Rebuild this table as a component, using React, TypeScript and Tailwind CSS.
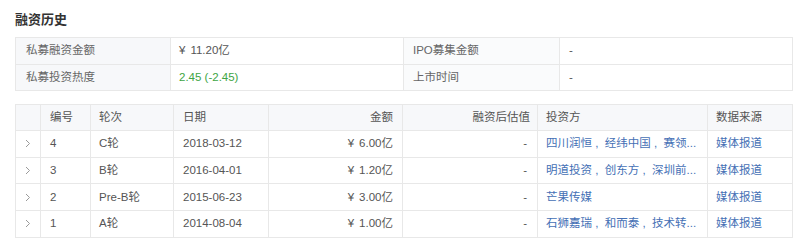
const font = { fontFamily: '"Liberation Sans", "Noto Sans CJK SC", sans-serif' };

const sep = '\u00a0,\u00a0\u00a0';

const rounds = [
  { no: '4', round: 'C轮', date: '2018-03-12', amount: '6.00亿', value: '-', investors: `四川润恒${sep}经纬中国${sep}赛领...`, source: '媒体报道' },
  { no: '3', round: 'B轮', date: '2016-04-01', amount: '1.20亿', value: '-', investors: `明道投资${sep}创东方${sep}深圳前...`, source: '媒体报道' },
  { no: '2', round: 'Pre-B轮', date: '2015-06-23', amount: '3.00亿', value: '-', investors: '芒果传媒', source: '媒体报道' },
  { no: '1', round: 'A轮', date: '2014-08-04', amount: '1.00亿', value: '-', investors: `石狮嘉瑞${sep}和而泰${sep}技术转...`, source: '媒体报道' },
];

function Chevron() {
  return (
    <svg width="6" height="9" viewBox="0 0 6 9" className="mx-auto">
      <polyline points="1,1 4.5,4.5 1,8" fill="none" stroke="#9a9a9a" strokeWidth="1" />
    </svg>
  );
}

function Money({ v }: { v: string }) {
  return (
    <>
      <span className="mr-[5px]">¥</span>
      {v}
    </>
  );
}

export default function App() {
  const cell = 'border border-[#e8e8e8] px-[9px] whitespace-nowrap overflow-hidden';
  return (
    <div className="w-[800px] h-[251px] bg-white pl-[15px] pr-[8px] text-[11.5px] text-[#555]" style={font}>
      <div className="pt-[11px] h-[37px] text-[13px] font-bold text-[#333] leading-[18px]">融资历史</div>

      <table className="w-[777px] table-fixed border-collapse">
        <colgroup>
          <col className="w-[155px]" />
          <col className="w-[233px]" />
          <col className="w-[156px]" />
          <col className="w-[233px]" />
        </colgroup>
        <tbody>
          <tr className="h-[27px]">
            <td className={`${cell} bg-[#f7f8fa] text-[#666] pl-[10px]`}>私募融资金额</td>
            <td className={`${cell} pl-[8px]`}>
              <Money v="11.20亿" />
            </td>
            <td className={`${cell} bg-[#fafbfc] text-[#666]`}>IPO募集金额</td>
            <td className={cell}>-</td>
          </tr>
          <tr className="h-[26px]">
            <td className={`${cell} bg-[#f7f8fa] text-[#666] pl-[10px]`}>私募投资热度</td>
            <td className={`${cell} pl-[8px] text-[#3ea544]`}>2.45 (-2.45)</td>
            <td className={`${cell} bg-[#fafbfc] text-[#666]`}>上市时间</td>
            <td className={cell}>-</td>
          </tr>
        </tbody>
      </table>

      <table className="mt-[13px] w-[777px] table-fixed border-collapse">
        <colgroup>
          <col className="w-[25px]" />
          <col className="w-[50px]" />
          <col className="w-[83px]" />
          <col className="w-[95px]" />
          <col className="w-[134px]" />
          <col className="w-[135px]" />
          <col className="w-[170px]" />
          <col className="w-[85px]" />
        </colgroup>
        <thead>
          <tr className="h-[26px] bg-[#f7f8fa] text-[#555]">
            <th className="border border-[#e8e8e8]"></th>
            <th className={`${cell} font-normal text-left`}>编号</th>
            <th className={`${cell} font-normal text-left pl-[8px]`}>轮次</th>
            <th className={`${cell} font-normal text-left`}>日期</th>
            <th className={`${cell} font-normal text-right`}>金额</th>
            <th className={`${cell} font-normal text-right pr-[7px]`}>融资后估值</th>
            <th className={`${cell} font-normal text-left pl-[8px]`}>投资方</th>
            <th className={`${cell} font-normal text-left pl-[8px]`}>数据来源</th>
          </tr>
        </thead>
        <tbody>
          {rounds.map((r) => (
            <tr key={r.no} className="h-[26.7px]">
              <td className="border border-[#e8e8e8]">
                <Chevron />
              </td>
              <td className={cell}>{r.no}</td>
              <td className={`${cell} pl-[8px]`}>{r.round}</td>
              <td className={cell}>{r.date}</td>
              <td className={`${cell} text-right`}>
                <Money v={r.amount} />
              </td>
              <td className={`${cell} text-right pr-[10px]`}>{r.value}</td>
              <td className={`${cell} pl-[8px] text-[#4570b5]`}>{r.investors}</td>
              <td className={`${cell} pl-[8px] text-[#4570b5]`}>{r.source}</td>
            </tr>
          ))}
        </tbody>
      </table>
    </div>
  );
}
